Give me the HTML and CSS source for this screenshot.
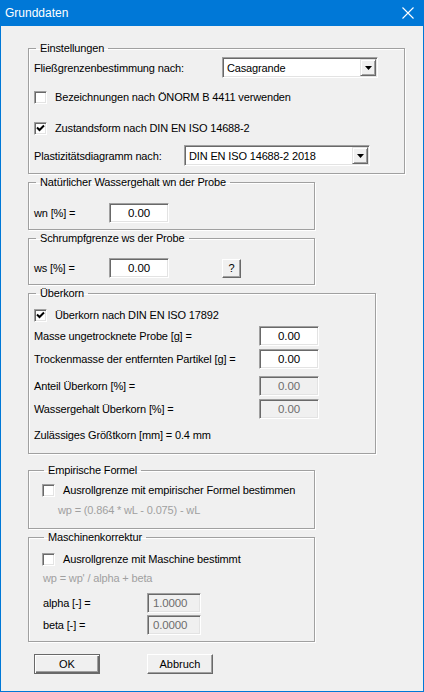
FILE: index.html
```html
<!DOCTYPE html>
<html lang="de">
<head>
	<meta charset="UTF-8">
	<meta name="viewport" content="width=device-width, initial-scale=1.0">
	<title>Grunddaten</title>
	<link rel="stylesheet" href="styles.css">
</head>
<body>
	<div class="window">
		<div class="titlebar">
			<span class="title">Grunddaten</span>
			<svg class="close" width="12" height="12" viewBox="0 0 12 12"><path d="M0.5 0.5 L11.5 11.5 M11.5 0.5 L0.5 11.5" stroke="#fff" stroke-width="1.1" fill="none"/></svg>
		</div>

		<div class="client">

			<fieldset class="group group-wide">
				<legend>Einstellungen</legend>
				<div class="row row-combo">
					<span class="label label-method">Fließgrenzenbestimmung nach:</span>
					<div class="combo combo-method">
						<span class="combo-text">Casagrande</span>
						<span class="drop"><svg width="7" height="4" viewBox="0 0 7 4"><path d="M0 0 H7 L3.5 4 Z" fill="#000"/></svg></span>
					</div>
				</div>
				<label class="row check-row cb-norm">
					<span class="checkbox"></span>
					<span>Bezeichnungen nach ÖNORM B 4411 verwenden</span>
				</label>
				<label class="row check-row cb-state">
					<span class="checkbox checked"><svg width="9" height="9" viewBox="0 0 9 9"><path d="M1 3.5 L3.5 6 L8 1.5" stroke="#000" stroke-width="2" fill="none"/></svg></span>
					<span>Zustandsform nach DIN EN ISO 14688-2</span>
				</label>
				<div class="row row-plast">
					<span class="label label-plast">Plastizitätsdiagramm nach:</span>
					<div class="combo combo-plast">
						<span class="combo-text">DIN EN ISO 14688-2 2018</span>
						<span class="drop"><svg width="7" height="4" viewBox="0 0 7 4"><path d="M0 0 H7 L3.5 4 Z" fill="#000"/></svg></span>
					</div>
				</div>
			</fieldset>

			<fieldset class="group group-small group-wn">
				<legend>Natürlicher Wassergehalt wn der Probe</legend>
				<div class="row row-value">
					<span class="label label-short">wn [%] =</span>
					<span class="field">0.00</span>
				</div>
			</fieldset>

			<fieldset class="group group-small group-ws">
				<legend>Schrumpfgrenze ws der Probe</legend>
				<div class="row row-value">
					<span class="label label-short">ws [%] =</span>
					<span class="field">0.00</span>
					<button class="btn btn-help">?</button>
				</div>
			</fieldset>

			<fieldset class="group group-mid group-over">
				<legend>Überkorn</legend>
				<label class="row check-row cb-over">
					<span class="checkbox checked"><svg width="9" height="9" viewBox="0 0 9 9"><path d="M1 3.5 L3.5 6 L8 1.5" stroke="#000" stroke-width="2" fill="none"/></svg></span>
					<span>Überkorn nach DIN EN ISO 17892</span>
				</label>
				<div class="row row-mass">
					<span class="label label-long">Masse ungetrocknete Probe [g] =</span>
					<span class="field">0.00</span>
				</div>
				<div class="row row-dry">
					<span class="label label-long">Trockenmasse der entfernten Partikel [g] =</span>
					<span class="field">0.00</span>
				</div>
				<div class="row row-share">
					<span class="label label-long">Anteil Überkorn [%] =</span>
					<span class="field disabled">0.00</span>
				</div>
				<div class="row row-water">
					<span class="label label-long">Wassergehalt Überkorn [%] =</span>
					<span class="field disabled">0.00</span>
				</div>
				<div class="row row-max">Zulässiges Größtkorn [mm] = 0.4 mm</div>
			</fieldset>

			<fieldset class="group group-small group-emp">
				<legend>Empirische Formel</legend>
				<label class="row check-row cb-emp">
					<span class="checkbox"></span>
					<span>Ausrollgrenze mit empirischer Formel bestimmen</span>
				</label>
				<div class="row formula formula-emp">wp = (0.864 * wL - 0.075) - wL</div>
			</fieldset>

			<fieldset class="group group-small group-mach">
				<legend>Maschinenkorrektur</legend>
				<label class="row check-row cb-mach">
					<span class="checkbox"></span>
					<span>Ausrollgrenze mit Maschine bestimmt</span>
				</label>
				<div class="row formula formula-mach">wp = wp' / alpha + beta</div>
				<div class="row row-alpha">
					<span class="label label-coef">alpha [-] =</span>
					<span class="field field-coef disabled">1.0000</span>
				</div>
				<div class="row row-beta">
					<span class="label label-coef">beta [-] =</span>
					<span class="field field-coef disabled">0.0000</span>
				</div>
			</fieldset>

			<div class="buttons">
				<button class="btn btn-default">OK</button>
				<button class="btn btn-cancel">Abbruch</button>
			</div>

		</div>
	</div>
</body>
</html>
```

FILE: styles.css
```css
*, *:before, *:after {
	box-sizing: border-box;
}
html, body {
	margin: 0;
	padding: 0;
	background: #f0f0f0;
}
body {
	font-family: 'Liberation Sans', Arial, sans-serif;
	font-size: 11px;
	letter-spacing: -0.15px;
	color: #000;
}
.window {
	width: 424px;
	height: 692px;
	border: 1px solid #0078d7;
	border-top: 0;
	background: #f0f0f0;
}
.titlebar {
	height: 26px;
	margin: 0 -1px;
	background: #0078d7;
	color: #fff;
	display: flex;
	align-items: center;
	justify-content: space-between;
	padding: 0 10px 0 5px;
}
.title {
	font-size: 12px;
	letter-spacing: 0;
	padding-bottom: 1px;
}
.close {
	display: block;
	margin-top: -1px;
}
.client {
	padding: 15px 0 0 27px;
}

/* group boxes */
.group {
	margin: 1px 0 0 0;
	padding: 0 5px 6px 5px;
	border: 1px solid #a0a0a0;
	box-shadow: inset 1px 1px 0 #fff, 1px 1px 0 #fff;
	min-width: 0;
}
.group legend {
	margin-left: 2px;
	padding: 0 4px;
	line-height: 14px;
	height: 14px;
}
.group-wide {
	width: 377px;
	margin-top: 0;
	padding-bottom: 7px;
}
.group-small {
	width: 287px;
}
.group-mid {
	width: 348px;
	padding-bottom: 8px;
}
.group-emp {
	margin-top: 9px;
	padding-left: 13px;
	padding-bottom: 9px;
}
.group-mach {
	padding-left: 13px;
}

.row {
	display: flex;
	align-items: center;
	height: 20px;
	white-space: nowrap;
}
.label {
	flex: none;
}
.label-method { width: 188px; }
.label-plast { width: 150px; }
.label-short { width: 75px; }
.label-long { width: 225px; }
.label-coef { width: 104px; margin-left: 1px; }

.row-combo { margin-top: 2px; height: 21px; }
.cb-norm { margin-top: 9px; }
.cb-state { margin-top: 11px; }
.row-plast { margin-top: 7px; height: 21px; }

.group-wn .row-value { margin-top: 14px; }
.group-ws .row-value { margin-top: 13px; }

.cb-over { margin-top: 5px; }
.row-mass { margin-top: 1px; }
.row-dry { margin-top: 3px; }
.row-share { margin-top: 7px; }
.row-water { margin-top: 3px; }
.row-max { margin-top: 6px; }

.cb-emp { margin-top: 3px; }
.formula {
	height: 18px;
	color: #a0a0a0;
}
.formula-emp { margin-top: 1px; padding-left: 16px; }
.cb-mach { margin-top: 5px; }
.formula-mach { padding-left: 1px; }
.row-alpha { margin-top: 6px; }
.row-beta { margin-top: 2px; }

/* checkbox */
.check-row {
	gap: 8px;
}
.checkbox {
	flex: none;
	width: 13px;
	height: 13px;
	background: #fff;
	border: 1px solid;
	border-color: #a0a0a0 #fff #fff #a0a0a0;
	box-shadow: inset 1px 1px 0 #696969, inset -1px -1px 0 #e3e3e3;
	display: flex;
	align-items: center;
	justify-content: center;
}
.checkbox svg {
	display: block;
}

/* edit fields */
.field {
	flex: none;
	width: 60px;
	height: 20px;
	background: #fff;
	border: 1px solid;
	border-color: #a0a0a0 #fff #fff #a0a0a0;
	box-shadow: inset 1px 1px 0 #696969, inset -1px -1px 0 #e3e3e3;
	text-align: center;
	line-height: 18px;
	font-size: 11.5px;
}
.field.disabled {
	background: #f0f0f0;
	color: #6d6d6d;
}
.field-coef {
	width: 54px;
	text-align: left;
	padding-left: 5px;
}

/* combo boxes */
.combo {
	flex: none;
	height: 21px;
	background: #fff;
	border: 1px solid;
	border-color: #a0a0a0 #fff #fff #a0a0a0;
	box-shadow: inset 1px 1px 0 #696969, inset -1px -1px 0 #e3e3e3;
	display: flex;
	align-items: center;
	justify-content: space-between;
	padding: 1px 1px 1px 4px;
}
.combo-method { width: 156px; }
.combo-plast { width: 186px; }
.drop {
	width: 16px;
	height: 17px;
	background: #f0f0f0;
	border: 1px solid;
	border-color: #e3e3e3 #696969 #696969 #e3e3e3;
	box-shadow: inset 1px 1px 0 #fff, inset -1px -1px 0 #a0a0a0;
	display: flex;
	align-items: center;
	justify-content: center;
}
.drop svg {
	display: block;
}

/* push buttons */
.btn {
	font: inherit;
	color: #000;
	background: #f0f0f0;
	height: 20px;
	padding: 0;
	border: 1px solid;
	border-color: #fff #696969 #696969 #fff;
	box-shadow: inset -1px -1px 0 #a0a0a0;
	line-height: 16px;
}
.btn-help {
	width: 19px;
	height: 19px;
	margin-left: 53px;
}
.buttons {
	display: flex;
	margin: 12px 0 0 6px;
	gap: 47px;
}
.btn-default {
	width: 66px;
	border: 1px solid #696969;
	box-shadow: inset 1px 1px 0 #fff, inset -1px -1px 0 #696969, inset -2px -2px 0 #a0a0a0;
}
.btn-cancel {
	width: 66px;
}
```
